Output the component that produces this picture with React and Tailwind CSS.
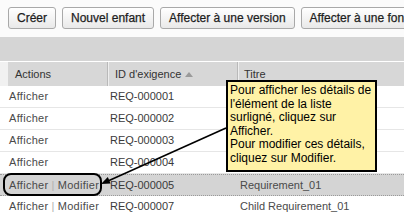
import React from 'react';

const rows = [
  { id: 'REQ-000001', title: '', edit: false },
  { id: 'REQ-000002', title: '', edit: false },
  { id: 'REQ-000003', title: '', edit: false },
  { id: 'REQ-000004', title: '', edit: false },
  { id: 'REQ-000005', title: 'Requirement_01', edit: true, selected: true },
  { id: 'REQ-000007', title: 'Child Requirement_01', edit: true },
];

const buttons = ['Créer', 'Nouvel enfant', 'Affecter à une version', 'Affecter à une fonctionnalité'];

const App = () => {
  return (
    <div className="relative w-[404px] h-[217px] overflow-hidden bg-white font-['Liberation_Sans',Arial,sans-serif]">
      {/* barre d'outils */}
      <div className="h-[37px] flex items-start gap-[6px] pl-[8px] pt-[7px] bg-[#fbfbfb] whitespace-nowrap">
        {buttons.map((b) => (
          <button
            key={b}
            className="h-[22px] shrink-0 px-[8px] text-[12px] leading-none text-[#1e1e1e] [-webkit-text-stroke:0.25px_#1e1e1e] border border-[#a9a9a9] rounded-[3px] bg-gradient-to-b from-white to-[#e9e9e9]"
          >
            {b}
          </button>
        ))}
      </div>

      <div className="h-[24px] bg-[#d5d5d5]" />

      {/* en-tête */}
      <div className="flex h-[25px] border-t border-white text-[11px] text-[#333] bg-[#f1f1f1]">
        <div className="ml-[8px] w-[100px] flex items-center pl-[7px] bg-[#d7d7d7] border-r border-[#b9b9b9]">Actions</div>
        <div className="w-[130px] flex items-center pl-[6px] bg-[#d7d7d7] border-r border-[#b9b9b9] border-l border-l-[#eeeeee]">
          ID d'exigence
          <svg width="8" height="5" viewBox="0 0 8 5" className="ml-[4px]">
            <path d="M0 5 L4 0 L8 5 Z" fill="#9a9a9a" />
          </svg>
        </div>
        <div className="flex-1 flex items-center pl-[5px] bg-[#d7d7d7] border-l border-[#eeeeee]">Titre</div>
      </div>

      {/* lignes */}
      {rows.map((r) => (
        <div
          key={r.id}
          className={
            r.selected
              ? 'flex h-[22px] items-center text-[11px] text-[#4a4a4a] bg-[#d4d4d4] border-y border-dotted border-[#9a9a9a]'
              : 'flex h-[22px] items-center text-[11px] text-[#4a4a4a] border-b border-[#e6e6e6]'
          }
        >
          <div className="w-[108px] pl-[9px] tracking-[0.3px]">
            Afficher
            {r.edit && (
              <>
                <span className="text-[#b0b0b0] mx-[3px]">|</span>Modifier
              </>
            )}
          </div>
          <div className="w-[130px] pl-[2px] text-[#3a3a3a]">{r.id}</div>
          <div className="flex-1 pl-[2px]">{r.title}</div>
        </div>
      ))}

      {/* bulle d'aide */}
      <div className="absolute left-[226px] top-[80px] w-[151px] h-[92px] border-2 border-black bg-[#fff2a6] pl-[2px] pt-[2px] text-[12px] leading-[13.6px] text-black">
        Pour afficher les détails de
        <br />
        l'élément de la liste
        <br />
        surligné, cliquez sur
        <br />
        Afficher.
        <br />
        Pour modifier ces détails,
        <br />
        cliquez sur Modifier.
      </div>

      {/* encadré */}
      <div className="absolute left-[3px] top-[173px] w-[99px] h-[23px] border-2 border-black rounded-[8px]" />

      {/* flèche */}
      <svg className="absolute left-0 top-0 pointer-events-none" width="404" height="217" viewBox="0 0 404 217">
        <line x1="226" y1="128" x2="108" y2="181" stroke="black" strokeWidth="1.6" />
        <path d="M101 184 L107.8 177.1 L110.6 183.5 Z" fill="black" />
      </svg>
    </div>
  );
};

export default App;
